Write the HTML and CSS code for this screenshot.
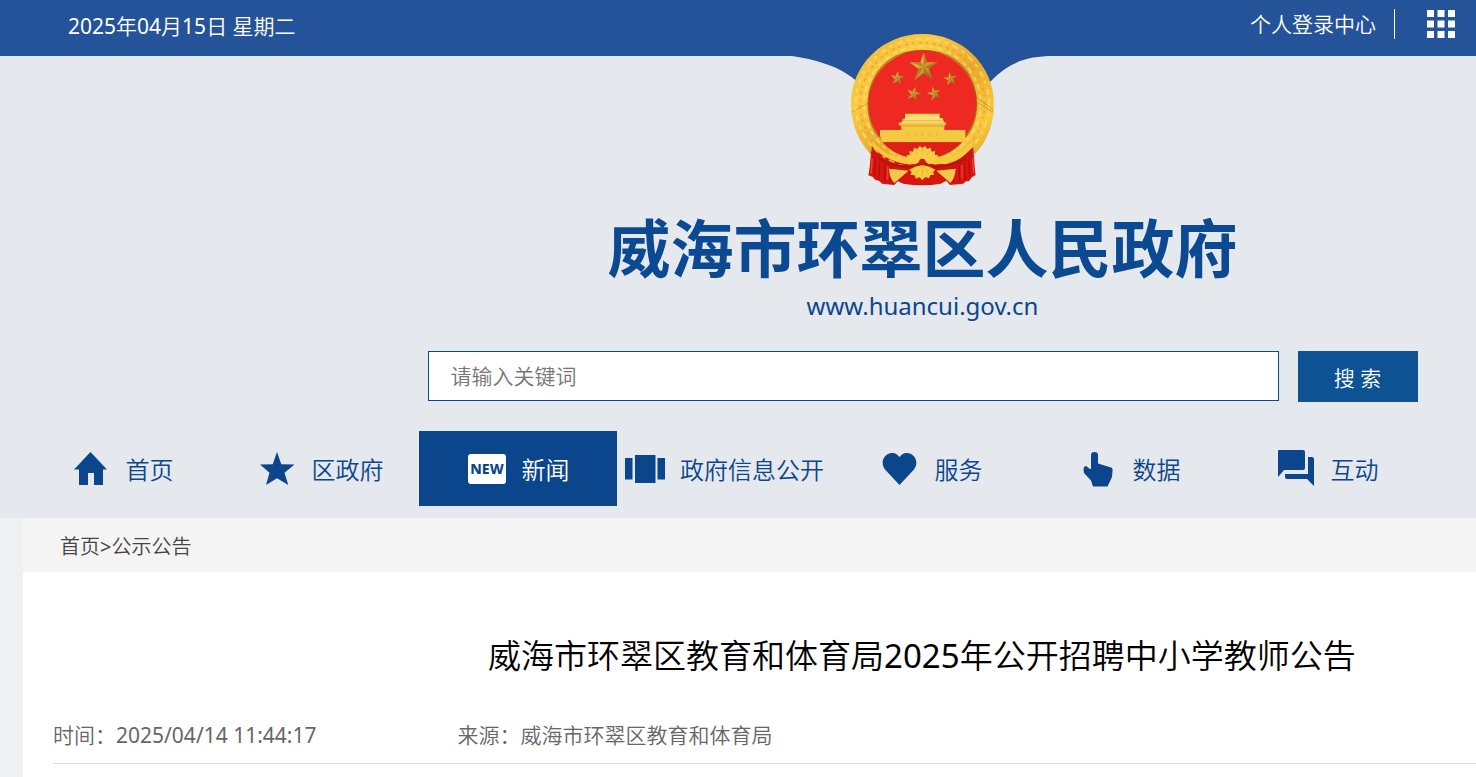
FILE: index.html
```html
<!DOCTYPE html>
<html lang="zh-CN">
<head>
<meta charset="utf-8">
<meta name="viewport" content="width=device-width, initial-scale=1">
<title>威海市环翠区人民政府</title>
<link rel="stylesheet" href="styles.css">
</head>
<body>
<header class="site-header">
  <div class="topbar">
    <span class="topbar-date"><span class="num">2025</span>年<span class="num">04</span>月<span class="num">15</span>日 星期二</span>
    <div class="topbar-tools">
      <a class="login-link" href="#">个人登录中心</a>
      <button class="apps-button" type="button" aria-label="应用">
        <svg width="28" height="28" viewBox="0 0 28 28" fill="#fff"><path d="M0 0h7v7H0zM10.500 0h7v7h-7zM21 0h7v7h-7zM0 10.500h7v7H0zM10.500 10.500h7v7h-7zM21 10.500h7v7h-7zM0 21h7v7H0zM10.500 21h7v7h-7zM21 21h7v7h-7z"/></svg>
      </button>
    </div>
  </div>
  <div class="hero">
    <svg class="wave" width="290" height="60" viewBox="0 0 290 60" fill="#25539a"><path d="M0 0H290V1H275C248 1 230 8 212 27Q195 60 145 60T80 27C60 10 38 5 14 1H0Z"/></svg>
    <svg class="emblem" width="143" height="152" viewBox="18 12 429 456" role="img" aria-label="国徽">
      <defs>
        <linearGradient id="gold" x1="0" y1="0" x2="1" y2="1"><stop offset="0" stop-color="#eeb534"/><stop offset=".3" stop-color="#fbcb43"/><stop offset=".55" stop-color="#e9a82c"/><stop offset=".8" stop-color="#f9ca40"/><stop offset="1" stop-color="#d99522"/></linearGradient>
        <linearGradient id="roof" x1="0" y1="0" x2="0" y2="1"><stop offset="0" stop-color="#ffd450"/><stop offset=".5" stop-color="#ffe489"/><stop offset="1" stop-color="#eeb42f"/></linearGradient>
        <linearGradient id="starfill" x1="0" y1="0" x2="1" y2="1"><stop offset="0" stop-color="#ffd34c"/><stop offset=".5" stop-color="#d8a132"/><stop offset="1" stop-color="#94611a"/></linearGradient>
        <g id="star"><path d="M0-42L10-13 42-13 16 6 27 40 0 19-27 40-16 6-42-13-10-13Z" fill="url(#starfill)"/><path d="M0-42V0L10-13ZM42-13L0 0 16 6ZM27 40L0 0V19ZM-27 40L0 0-16 6ZM-42-13L0 0-10-13Z" fill="#8b5a16" opacity=".5"/></g>
      </defs>
      <path d="M82 330C76 370 77 405 70 436L84 441 90 449 103 453 111 461 148 465 158 454 175 461Q232 471 287 461L304 452 315 465 355 461 363 454 373 453 380 442 392 435C387 405 388 365 382 330Z" fill="#d8150f"/>
      <path d="M93 375L88 438M105 390L101 448M120 398L119 455M139 410L135 458M370 375L375 440M357 390L361 449M342 402L344 454M325 412L326 458" stroke="#ab0d0d" stroke-width="3" fill="none"/>
      <path d="M83 370L78 430M128 405L127 450M382 370L386 430M350 400L352 445" stroke="#ef3a2c" stroke-width="5" fill="none"/>
      <path d="M232 12C350 12 447 105 447 222C447 282 425 336 390 372L382 346C350 382 310 400 270 404L232 388 195 404C150 398 110 375 83 346L77 373C42 334 18 285 18 222C18 105 114 12 232 12Z" fill="url(#gold)"/>
      <g fill="none" stroke-linecap="round">
        <ellipse cx="232" cy="221" rx="200" ry="195" stroke="#ffdf72" stroke-width="6" stroke-dasharray="13 17 6 21" opacity=".7"/>
        <ellipse cx="232" cy="221" rx="187" ry="183" stroke="#c88a20" stroke-width="5" stroke-dasharray="3 19 6 14" opacity=".4"/>
        <ellipse cx="232" cy="221" rx="175" ry="172" stroke="#ffe07a" stroke-width="6" stroke-dasharray="8 15 14 19" opacity=".65"/>
      </g>
      <path d="M20 247L70 218M395 216L445 247M393 200L445 240M80 350L76 370M385 350L389 370" stroke="#a16b18" stroke-width="3" fill="none" opacity=".45"/>
      <ellipse cx="232" cy="222" rx="162" ry="161" fill="#ed2921"/>
      <path d="M103 322C35 245 66 62 232 61C398 62 429 245 361 322" fill="none" stroke="#8d4f16" stroke-width="4" opacity=".7"/>
      <use href="#star" x="236" y="110"/>
      <use href="#star" transform="translate(157 144) rotate(5) scale(.48)"/>
      <use href="#star" transform="translate(316 146) rotate(-8) scale(.48)"/>
      <use href="#star" transform="translate(206 191) rotate(15) scale(.5)"/>
      <use href="#star" transform="translate(268 190) rotate(-15) scale(.5)"/>
      <path d="M180 251H284V264H293L296 275 305 280 299 288H165L160 280 171 275 174 266H180Z" fill="url(#roof)"/>
      <path d="M169 287H298V300H361V320L349 337H114L105 318V300H169Z" fill="#f6c944"/>
      <path d="M166 288H300M174 271H292" stroke="#c98d21" stroke-width="3" opacity=".5"/>
      <path d="M190 307v10M210 309v14M232 306v16M254 309v14M276 307v10" stroke="#cf8f20" stroke-width="3" stroke-dasharray="4 4" opacity=".6"/>
      <path d="M112 337H352Q315 374 276 382L188 382Q142 370 112 337Z" fill="#df2019"/>
      <path d="M83 332C112 370 148 386 194 381C215 383 250 383 270 381C315 384 350 366 382 332L384 350C350 390 316 405 284 402L248 401 232 391 216 401 186 402C146 397 109 378 82 350Z" fill="#f8c83c"/>
      <path d="M195 374L193 363 204 365 207 353 217 357 224 348 232 354 240 348 247 357 257 353 260 365 271 363 269 374 280 376Q273 400 250 402L232 390 214 402Q191 400 184 376Z" fill="#f9cd45"/>
      <path d="M83 360C108 390 155 410 208 405L232 390 256 405C312 410 350 390 380 355L384 382C350 414 310 422 275 421L232 410 190 421C145 419 110 402 80 384Z" fill="#cc150f"/>
      <path d="M100 385Q150 415 207 411M257 411Q315 412 363 385" fill="none" stroke="#a2100c" stroke-width="3"/>
      <path d="M132 416L191 422 148 459Q133 444 132 416ZM332 416L274 422 316 459Q331 444 332 416Z" fill="#f1c849"/>
      <path d="M193 419L210 410 232 405 254 410 271 419 264 426 268 434 256 435 252 445 241 441 232 451 224 442 213 446 208 435 196 435 200 426Z" fill="#f8cd3c"/>
      <path d="M232 418V440M220 418L211 436M244 418L253 436M232 368V356M218 375L212 364M246 375L252 364" stroke="#d89b21" stroke-width="2" opacity=".7"/>
      <circle cx="232" cy="396" r="10" fill="#cf1914"/>
    </svg>
    <h1 class="site-title">威海市环翠区人民政府</h1>
    <p class="site-url">www.huancui.gov.cn</p>
    <form class="search">
      <input class="search-input" type="text" placeholder="请输入关键词" aria-label="请输入关键词">
      <button class="search-button" type="button">搜 索</button>
    </form>
  </div>
  <nav class="nav">
    <a class="nav-item" href="#"><svg class="nav-icon" viewBox="0 0 40 40"><path d="M19.500 3L36 20.500H32V36H23V24H17V36H8V20.500H3Z"/></svg>首页</a>
    <a class="nav-item" href="#"><svg class="nav-icon" viewBox="0 0 40 40"><path d="M20 3L24.300 15.300 37.500 15.500 27.500 23.700 31.300 36 20 29.300 9 36 12.500 23.700 3 15.500 15.700 15.300Z"/></svg>区政府</a>
    <a class="nav-item active" href="#"><svg class="nav-icon" viewBox="0 0 40 40"><rect x="1" y="5" width="38" height="30" rx="3"/><text class="new-label" x="20" y="25" text-anchor="middle">NEW</text></svg>新闻</a>
    <a class="nav-item" href="#"><svg class="nav-icon" viewBox="0 0 40 40"><path d="M0 9H7.500V30.500H0ZM10 6H30.500V34H10ZM32.500 9H40V30.500H32.500Z"/></svg>政府信息公开</a>
    <a class="nav-item" href="#"><svg class="nav-icon" viewBox="0 0 40 40"><path d="M19.500 36L5 20.500C-2 11 8 0 17 5.500L19.500 8 22 5.500C31 0 41 11 34 20.500Z"/></svg>服务</a>
    <a class="nav-item" href="#"><svg class="nav-icon" viewBox="0 0 40 40"><path d="M13 6Q13 3 16.500 3T20 6V14.500L33 18.500Q35 19 34.500 22L34 28 29.500 37.500H15L13 31.500 6 24Q4.500 17 8 17L12 20H13Z"/></svg>数据</a>
    <a class="nav-item" href="#"><svg class="nav-icon" viewBox="0 0 40 40"><path d="M3 1H27Q29 1 29 3V19Q29 21 27 21H8L2 28V2Q2 1 3 1ZM32 8H36Q38 8 38 10V37L31 30H11Q9 30 9 28V25H32Z"/></svg>互动</a>
  </nav>
</header>
<main class="page">
  <div class="breadcrumb"><a href="#">首页</a><span class="num">&gt;</span><a href="#">公示公告</a></div>
  <article class="article">
    <h2 class="article-title">威海市环翠区教育和体育局<span class="num">2025</span>年公开招聘中小学教师公告</h2>
    <div class="article-meta">
      <span>时间：<span class="num">2025/04/14 11:44:17</span></span>
      <span>来源：威海市环翠区教育和体育局</span>
    </div>
  </article>
</main>
</body>
</html>
```
FILE: styles.css
```css
* { box-sizing: border-box; }

body {
  margin: 0;
  background: #edf1f2;
  font-family: "Noto Sans", "Noto Sans CJK SC", sans-serif;
  font-weight: 350;
  color: #444;
  overflow-x: hidden;
}

a { color: inherit; text-decoration: none; }

.num { font-weight: 400; }

.site-header {
  background: #e5e8ed;
  padding-bottom: 12px;
}

.topbar {
  display: flex;
  justify-content: space-between;
  align-items: center;
  height: 56px;
  padding: 0 21px 8px 68px;
  background: #25539a;
  color: #fff;
  font-size: 21px;
  line-height: 30px;
}

.topbar-date { padding-top: 4px; }

.topbar-tools {
  display: flex;
  align-items: center;
  gap: 32px;
}

.login-link {
  padding-right: 18px;
  border-right: 1px solid #fff;
}

.apps-button {
  display: flex;
  padding: 0;
  border: 0;
  background: none;
}

.hero {
  position: relative;
  display: flex;
  flex-direction: column;
  align-items: center;
  padding-left: 25%;
}

.wave {
  position: absolute;
  top: -1px;
  left: 62.5%;
  margin-left: -145px;
}

.emblem {
  position: relative;
  margin-top: -22px;
}

.site-title {
  margin: 18px 0 0;
  color: #0b4a92;
  font-size: 63px;
  font-weight: 700;
  line-height: 88px;
}

.site-url {
  margin: 0;
  color: #0b468d;
  font-size: 24px;
  font-weight: 400;
  line-height: 28px;
}

.search {
  display: flex;
  gap: 19px;
  width: 100%;
  max-width: 990px;
  margin: 31px 0 29px;
}

.search-input {
  flex: 1;
  min-width: 0;
  height: 50px;
  padding: 0 22px;
  border: 1px solid #0b4a92;
  background: #fff;
  font: inherit;
  font-size: 21px;
}

.search-input::placeholder { color: #757575; }

.search-button {
  width: 120px;
  height: 51px;
  border: 0;
  background: #0d5393;
  color: #fff;
  font: inherit;
  font-size: 21px;
}

.nav {
  display: flex;
  padding-left: 23px;
}

.nav-item {
  display: flex;
  align-items: center;
  justify-content: center;
  gap: 15px;
  flex: none;
  min-width: 198px;
  height: 75px;
  padding: 0 8px;
  color: #0b468d;
  font-size: 24px;
  white-space: nowrap;
}

.nav-item.active {
  background: #0b468d;
  color: #fff;
}

.nav-icon {
  width: 40px;
  height: 40px;
  fill: currentColor;
}

.new-label {
  fill: #0b468d;
  font-family: "Noto Sans", sans-serif;
  font-size: 14px;
  font-weight: 800;
}

.page {
  margin-left: 23px;
  background: #fff;
}

.breadcrumb {
  padding: 14px 37px 10px;
  background: #f4f4f4;
  font-size: 20px;
  line-height: 30px;
}

.article {
  padding: 60px 0 13px 30px;
}

.article-title {
  margin: 0 0 0 calc(25% - 41px);
  color: #000;
  font-size: 33px;
  font-weight: 350;
  line-height: 48px;
  text-align: center;
}

.article-meta {
  display: flex;
  gap: 141px;
  margin-top: 40px;
  padding-bottom: 13px;
  border-bottom: 1px solid #ddd;
  color: #666;
  font-size: 21px;
  line-height: 30px;
}
```
